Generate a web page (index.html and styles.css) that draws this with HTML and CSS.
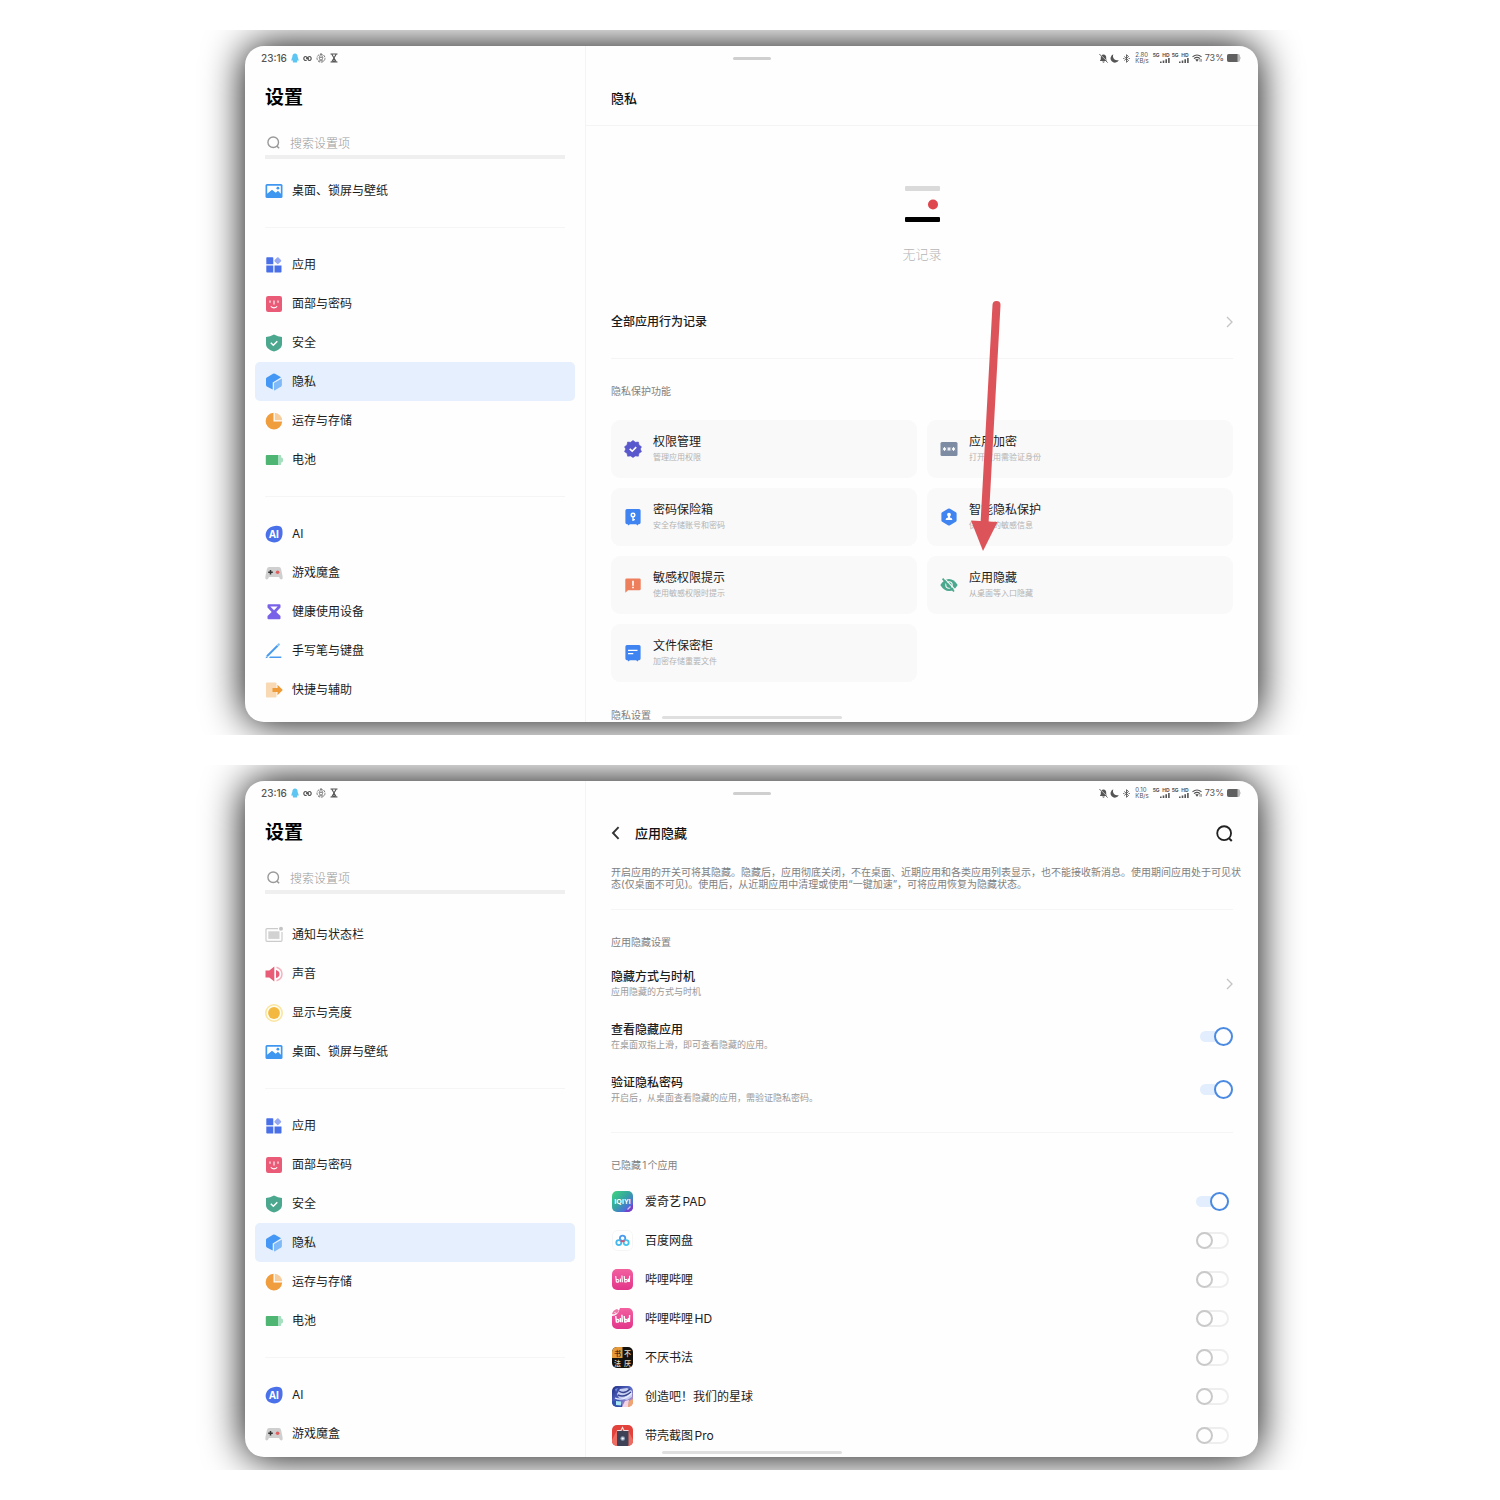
FILE: index.html
```html
<!DOCTYPE html>
<html lang="zh-CN">

<head>
    <meta charset="UTF-8">
    <meta name="viewport" content="width=device-width, initial-scale=1">
    <title>设置 - 隐私</title>
    <link rel="stylesheet" href="styles.css">
</head>

<body>
    <!-- icon sprite -->
    <svg class="sprite" aria-hidden="true">
        <defs>
            <linearGradient id="g-iqiyi" x1="0" y1="0" x2="1" y2="1">
                <stop offset="0" stop-color="#3fd67c" />
                <stop offset=".45" stop-color="#35a5a0" />
                <stop offset=".75" stop-color="#4a72d8" />
                <stop offset="1" stop-color="#8a3fd0" />
            </linearGradient>
            <linearGradient id="g-bili" x1="0" y1="0" x2="0" y2="1">
                <stop offset="0" stop-color="#f2609f" />
                <stop offset="1" stop-color="#e2358a" />
            </linearGradient>
            <linearGradient id="g-planet" x1="0" y1="0" x2="1" y2="1">
                <stop offset="0" stop-color="#1c2c80" />
                <stop offset=".5" stop-color="#5a6bc8" />
                <stop offset="1" stop-color="#e7a0c0" />
            </linearGradient>
            <clipPath id="c-app"><rect width="21" height="21" rx="5" /></clipPath>
        </defs>

        <symbol id="i-qq" viewBox="0 0 8 10">
            <path d="M4 .4C2.200.4 1.400 1.800 1.400 3.400 1.400 4.600.3 5.600.4 7.200c.1.8.6.6 1-.1.1.9.4 1.200.7 1.500-.7.3-.5.9.3.9h3.200c.8 0 1-.6.3-.9.4-.4.6-.7.7-1.500.4.7.9.9 1 .1.1-1.600-1-2.600-1-3.800C6.600 1.800 5.800.4 4 .4z" fill="#5cc5f2" />
        </symbol>
        <symbol id="i-loop" viewBox="0 0 9 7">
            <path d="M3.600 5C2.200 6.200.8 5 .8 3.500S2.200.8 3.500 2L5.500 5C6.800 6.200 8.200 5 8.200 3.500S6.800.8 5.400 2L4.800 2.800M3 3.500h.8M5.300 3.500H6" fill="none" stroke="#555" stroke-width="1.200" />
        </symbol>
        <symbol id="i-wheel" viewBox="0 0 10 10">
            <g fill="none" stroke="#777">
                <circle cx="5" cy="5.200" r="4" stroke-dasharray="2.500 1" />
                <circle cx="5" cy="5.600" r="1.500" />
                <path d="M5 .5L3 5M5 .5L7 5M2.500 7.800h5" stroke-width=".8" />
            </g>
        </symbol>
        <symbol id="i-glass" viewBox="0 0 8 10">
            <path d="M.5 1h7M.5 9h7M1.700 1L6.300 9M6.300 1L1.700 9M3 8h2" fill="none" stroke="#555" stroke-width="1.100" />
        </symbol>
        <symbol id="i-bell" viewBox="0 0 9 9">
            <path d="M4.500.4C2.600.4 1.800 1.900 1.800 3.300v2L.8 7.100h7.400L7.200 5.300v-2C7.200 1.900 6.400.4 4.500.4zM3.300 7.600h2.400c0 1.400-2.400 1.400-2.400 0z" fill="#555" />
            <path d="M1 .4l8 8" stroke="#fefefe" stroke-width="1" />
            <path d="M.4 0l8.200 8.600" stroke="#555" stroke-width=".9" />
        </symbol>
        <symbol id="i-moon" viewBox="0 0 9 9">
            <path d="M3.300.3a4.300 4.300 0 1 0 5.500 5.700Q5 7 3.500 4.300 2.600 2.500 3.300.3z" fill="#555" />
        </symbol>
        <symbol id="i-bt" viewBox="0 0 7 9">
            <path d="M1.300 2.500l4.200 4L3.500 8.300V.7l2 1.800-4.200 4M.2 4.500h1.200M5.600 4.500h1.200" fill="none" stroke="#555" stroke-width=".9" />
        </symbol>
        <symbol id="i-bars" viewBox="0 0 10 5">
            <path d="M0 3.500h1.600V5H0zM2.700 2.500h1.600V5H2.700zM5.400 1.300H7V5H5.400zM8.100 0h1.600v5H8.100z" fill="#555" />
        </symbol>
        <symbol id="i-wifi" viewBox="0 0 10 8">
            <path d="M.5 2.900Q5-.9 9.500 2.900M2 4.600q3-2.600 6 0" fill="none" stroke="#555" stroke-width="1.200" />
            <path d="M3.200 5.600q1.800-1.400 3.600 0L5 7.700z" fill="#555" />
            <path d="M8 5v2.800M9.300 5v2.800" stroke="#666" stroke-width=".7" />
        </symbol>
        <symbol id="i-battery" viewBox="0 0 14 8">
            <rect width="13" height="8" rx="2" fill="#bbb" />
            <path d="M13 2.500q1.200 1.500 0 3z" fill="#bbb" />
            <path d="M2 0h8.500v8H2a2 2 0 0 1-2-2V2a2 2 0 0 1 2-2z" fill="#606060" />
        </symbol>

        <symbol id="i-search" viewBox="0 0 14 14">
            <circle cx="6.700" cy="6.700" r="5.700" fill="none" stroke="currentColor" stroke-width="1.500" />
            <path d="M10.600 10.800L13 13.200" stroke="currentColor" stroke-width="1.700" />
        </symbol>
        <symbol id="i-chevron" viewBox="0 0 7 12">
            <path d="M1 1l5 5-5 5" fill="none" stroke="#c4c4c4" stroke-width="1.300" />
        </symbol>
        <symbol id="i-back" viewBox="0 0 9 14">
            <path d="M7.600 1.200L2 7l5.600 5.800" fill="none" stroke="#333" stroke-width="1.900" />
        </symbol>

        <symbol id="i-wallpaper" viewBox="0 0 18 18">
            <rect x=".5" y="2" width="17" height="14" rx="1.500" fill="#3f97f0" />
            <path d="M2.200 3.700h13.600v8L13 8.800l-2.300 2L7 7.800l-4.800 4z" fill="#fff" />
            <circle cx="12.900" cy="6.200" r="1.400" fill="#3f97f0" />
        </symbol>
        <symbol id="i-apps" viewBox="0 0 18 18">
            <path d="M2 1.300h5.500a.8.8 0 0 1 .8.800v6.200H1.300V2.100a.8.8 0 0 1 .7-.8zM1.300 9.500h7v7H2.100a.8.8 0 0 1-.8-.8zM9.500 9.500h7v6.200a.8.8 0 0 1-.8.8H9.500z" fill="#4a70e8" />
            <rect x="10.100" y="2" width="5.400" height="5.400" rx="1" transform="rotate(45 12.800 4.700)" fill="#96a9f2" />
        </symbol>
        <symbol id="i-face" viewBox="0 0 18 18">
            <rect x="1" y="1" width="16" height="16" rx="2.200" fill="#ea5b77" />
            <path d="M5 5.600v2.200M13 5.600v2.200M9 5.600v4M5.800 11.300q3.200 3.200 6.400 0" fill="none" stroke="#fff" stroke-width="1.100" />
        </symbol>
        <symbol id="i-shield" viewBox="0 0 18 18">
            <path d="M9 .6q4 2.200 8 2.400v7.200C17 13.800 13 16.500 9 17.500 5 16.500 1 13.800 1 10.200V3Q5 2.800 9 .6z" fill="#4ba78e" />
            <path d="M5.800 8.800l2.500 2.400 4-4" fill="none" stroke="#fff" stroke-width="1.500" />
        </symbol>
        <symbol id="i-cube" viewBox="0 0 18 18">
            <path d="M9 .5q.6 0 1 .3l6.100 3.500-8.400 5.100V16.500L1.800 13.400q-.8-.5-.8-1.400V6q0-.9.800-1.400L8 .8q.4-.3 1-.3z" fill="#4497f4" />
            <path d="M9 17.500V10L16.900 5.400V12q0 .9-.8 1.400L10 17.200z" fill="#7fb9f8" />
        </symbol>
        <symbol id="i-pie" viewBox="0 0 18 18">
            <path d="M8.500.8a8.300 8.300 0 1 0 8.700 8.800H8.500z" fill="#f09d3d" />
            <path d="M9.800.8v7.500h7.400A8 8 0 0 0 9.800.8z" fill="#f6cd9d" />
        </symbol>
        <symbol id="i-power" viewBox="0 0 18 18">
            <path d="M13 4h2.200a1 1 0 0 1 1 1v1.500q2 0 2 2.500t-2 2.500V13a1 1 0 0 1-1 1H13z" fill="#a5dfbf" />
            <path d="M1.800 4H13v10H1.800a1 1 0 0 1-1-1V5a1 1 0 0 1 1-1z" fill="#4eb573" />
        </symbol>
        <symbol id="i-game" viewBox="0 0 18 18">
            <path d="M4 3h10q1.600 0 2.100 2l1.600 8q.3 2.400-1.300 2.500-1.400 0-2.400-2.500H4q-1 2.500-2.400 2.500Q0 15.400.3 13l1.600-8Q2.400 3 4 3z" fill="#cfcfcf" />
            <path d="M5.500 6v4.600M3.200 8.300h4.600" stroke="#333" stroke-width="1.500" />
            <circle cx="12.600" cy="8.200" r="1.800" fill="#e0605f" />
        </symbol>
        <symbol id="i-timer" viewBox="0 0 18 18">
            <path d="M3.500 1.200h11a1 1 0 0 1 1 1v2.200L11.300 9l4.200 4v2.300a1 1 0 0 1-1 1h-11a1 1 0 0 1-1-1V13l4.200-4-4.200-4.600V2.200a1 1 0 0 1 1-1z" fill="#7a62e8" />
            <path d="M5.300 3.400h7.400L9 7.300z" fill="#fff" />
        </symbol>
        <symbol id="i-pen" viewBox="0 0 18 18">
            <path d="M2 14.200L12.500 3.700" stroke="#4a9bef" stroke-width="2" />
            <path d="M12.500 3.700L14.500 1.700" stroke="#8cc3f7" stroke-width="2.200" />
            <path d="M1 14.300l-.3 1.900L3 15.500zM5 14.500h11.300v1.400H4z" fill="#4a9bef" />
        </symbol>
        <symbol id="i-shortcut" viewBox="0 0 18 18">
            <rect x="1" y="1.500" width="10.500" height="15" rx="1" fill="#f8d9b3" />
            <path d="M7.500 6.900h5V3.800L17.800 9l-5.300 5.200v-3.100h-5z" fill="#ef9b38" />
        </symbol>
        <symbol id="i-notice" viewBox="0 0 18 18">
            <path d="M13 2.700H2q-1 0-1 1v10.600q0 1 1 1h14q1 0 1-1V6" fill="none" stroke="#cbcbcb" stroke-width="1.200" />
            <rect x="3.300" y="5.300" width="11.200" height="7.600" fill="#d2d2d2" />
            <circle cx="16" cy="2.800" r="2" fill="#c4c4c4" />
        </symbol>
        <symbol id="i-sound" viewBox="0 0 18 18">
            <path d="M.5 5.500h3.800L9.300 1.600v14.800L4.300 12.500H.5zM11 5q3.500 1 3.500 4T11 13z" fill="#e85c77" />
            <path d="M11.500 2.300q5.500 1.700 5.500 6.700t-5.500 6.700" fill="none" stroke="#f5b2bf" stroke-width="1.500" />
        </symbol>
        <symbol id="i-sun" viewBox="0 0 18 18">
            <circle cx="9" cy="9" r="8.200" fill="#fffdf0" stroke="#f9e59f" stroke-width="1.500" />
            <circle cx="9" cy="9" r="5.900" fill="#f3b83f" />
        </symbol>

        <symbol id="i-badge" viewBox="0 0 18 18">
            <path d="M9 .4l2.400 1.900 3-.3.600 3 2.500 1.800L16.300 9l1.200 2.700-2.500 1.500-.6 3-3-.3L9 17.600l-2.400-1.700-3 .3-.6-3L.5 11.700 1.700 9 .5 6.800 3 5l.6-3 3 .3z" fill="#5a58cd" stroke="#5a58cd" stroke-linejoin="round" stroke-width=".6" />
            <path d="M5.700 8.900l2.500 2.300 4-4.100" fill="none" stroke="#fff" stroke-width="1.600" />
        </symbol>
        <symbol id="i-dots" viewBox="0 0 18 18">
            <rect x=".5" y="2" width="17" height="14" rx="1.500" fill="#7d8ca3" />
            <path d="M4.500 7v4M2.800 8l3.400 2M6.200 8l-3.400 2M9 7v4M7.300 8l3.400 2M10.700 8l-3.400 2M13.500 7v4M11.800 8l3.400 2M15.200 8l-3.400 2" stroke="#fff" stroke-width=".9" />
        </symbol>
        <symbol id="i-safe" viewBox="0 0 18 18">
            <path d="M3 1h12q1.600 0 1.600 1.600v12q0 1.600-1.600 1.600h-.6l-1 1.400-1.200-1.400H5.800l-1.200 1.400-1-1.400H3q-1.600 0-1.600-1.600v-12Q1.400 1 3 1z" fill="#3f84f0" />
            <circle cx="9" cy="7" r="1.800" fill="none" stroke="#fff" stroke-width="1.400" />
            <path d="M9 8.800v4.300M9 11.600h1.900" stroke="#fff" stroke-width="1.300" />
        </symbol>
        <symbol id="i-person" viewBox="0 0 18 18">
            <path d="M9 .5q.6 0 1 .3l5.800 3.400q.8.500.8 1.400v6.800q0 .9-.8 1.400L10 17.200q-1 .6-2 0l-5.800-3.400q-.8-.5-.8-1.400V5.600q0-.9.800-1.400L8 .8q.4-.3 1-.3z" fill="#3f84f0" />
            <circle cx="9" cy="6.700" r="1.900" fill="#fff" />
            <path d="M8 8h2v1.600q2.400.3 2.400 2.400H5.600q0-2.100 2.400-2.400z" fill="#fff" />
        </symbol>
        <symbol id="i-warn" viewBox="0 0 18 18">
            <path d="M2.500 2.500h13q1.200 0 1.200 1.200v9.300q0 1.200-1.200 1.200H4L1.300 16.800V3.700q0-1.200 1.200-1.200z" fill="#ed7f5c" />
            <path d="M9 4.800v5M9 10.700v1.600" stroke="#fff" stroke-width="1.600" />
        </symbol>
        <symbol id="i-hide" viewBox="0 0 18 18">
            <path d="M.3 9Q4 3 9 3t8.700 6Q14 15 9 15T.3 9z" fill="#4ba78e" />
            <circle cx="9" cy="9" r="3.200" fill="none" stroke="#f9f9f9" stroke-width="1.100" />
            <path d="M4.400 2.400l11.400 12" stroke="#f9f9f9" stroke-width="1.200" />
            <path d="M2.600 2.600L14 15.500" stroke="#4ba78e" stroke-width="1.700" />
        </symbol>
        <symbol id="i-cabinet" viewBox="0 0 18 18">
            <path d="M3 1h12q1.600 0 1.600 1.600v12q0 1.600-1.600 1.600h-.6l-1 1.400-1.200-1.400H5.800l-1.200 1.400-1-1.400H3q-1.600 0-1.600-1.600v-12Q1.400 1 3 1z" fill="#3f84f0" />
            <path d="M4 6.400h9.500M4 9.600h5.300" stroke="#fff" stroke-width="1.400" />
        </symbol>

        <symbol id="a-pan" viewBox="0 0 21 21">
            <rect x=".5" y=".5" width="20" height="20" rx="5" fill="#fff" stroke="#f5f5f5" />
            <g fill="none" stroke-width="1.800">
                <circle cx="10.600" cy="8.300" r="2.700" stroke="#4a9af0" />
                <circle cx="6.800" cy="12.600" r="2.500" stroke="#45b8ee" />
                <circle cx="14.200" cy="12.600" r="2.500" stroke="#45c3ee" />
                <path d="M8.700 10.300q1.900 2 3.800 0" stroke="#e9506a" />
            </g>
        </symbol>
        <symbol id="a-bili" viewBox="0 0 21 21">
            <rect width="21" height="21" rx="5" fill="url(#g-bili)" />
            <g fill="none" stroke="#fff" stroke-width="1.100">
                <path d="M3.700 7l.7 6q2.700.4 2.600-1.200t-2.500-1.300M8.300 9.500l.4 3.800M9.900 6.500l.5 6.800M12.200 7l.6 6q2.700.2 2.500-1.400t-2.600-1M16.400 9.500v3.500M17.600 6.700l-.2 6.300" />
            </g>
        </symbol>
        <symbol id="a-bilihd" viewBox="0 0 21 21">
            <path d="M8 0h8a5 5 0 0 1 5 5v11a5 5 0 0 1-5 5H5a5 5 0 0 1-5-5V8q6 0 8-8z" fill="url(#g-bili)" />
            <path d="M0 6q1-4 5-5l2 1.500Q5 7 0 6z" fill="#ef77a9" />
            <path d="M2.500 4.500l2 1.200" stroke="#fff" />
            <g fill="none" stroke="#fff" stroke-width="1.400">
                <path d="M3.700 8l.7 6q2.700.4 2.600-1.200t-2.500-1.300M8.300 10l.4 4.300M9.900 6.800l.5 7.500M12.200 8l.6 6q2.700.2 2.500-1.400t-2.600-1M16.400 10v4M17.600 7l-.2 7" />
            </g>
        </symbol>
        <symbol id="a-planet" viewBox="0 0 21 21">
            <g clip-path="url(#c-app)">
                <rect width="21" height="21" fill="url(#g-planet)" />
                <path d="M8 3l7-1 5 3v6l-5 3-8-2-2-4z" fill="#c5cdf0" />
                <path d="M6 9q6 3 13-3M7 5q5 4 11-2" fill="none" stroke="#39458f" stroke-width="1.400" />
                <path d="M3 12q8 4 17-5" fill="none" stroke="#e9edff" stroke-width="1.200" />
                <path d="M0 15l7-1 4 7H0z" fill="#3350ae" />
                <path d="M4 15l5 .5v4l-5-.5z" fill="#a8e8f5" />
                <path d="M10 21l3-6 4-1-1 7z" fill="#f4d3e2" />
                <path d="M17 15l4-2v8h-5z" fill="#f0a56e" />
                <path d="M3 3l3-1-2 4z" fill="#6f85e0" />
            </g>
        </symbol>
        <symbol id="a-shell" viewBox="0 0 21 21">
            <rect width="21" height="21" rx="5" fill="#e2423b" />
            <path d="M0 15L5 5h11l5 10v1a5 5 0 0 1-5 5H5a5 5 0 0 1-5-5z" fill="#ed6c62" />
            <rect x="5" y="5.500" width="11.500" height="15.500" rx="1" fill="#3d4257" />
            <path d="M5 5.500h4l1.500-3 1.500 3h4.500" fill="none" stroke="#f2dedd" stroke-width="1.200" />
            <circle cx="10.700" cy="13.500" r="2.300" fill="#8fa3bd" />
            <circle cx="10.700" cy="13.500" r="1.100" fill="#fff" />
        </symbol>
    </svg>

    <!-- 隐私 -->
    <section class="stage">
        <div class="screen">
            <aside class="sidebar">
                <div class="status status-left">
                    <span class="clock">23:16</span>
                    <svg width="8" height="10"><use href="#i-qq" /></svg>
                    <svg width="9" height="7"><use href="#i-loop" /></svg>
                    <svg width="10" height="10"><use href="#i-wheel" /></svg>
                    <svg width="8" height="10"><use href="#i-glass" /></svg>
                </div>
                <h1 class="title">设置</h1>
                <label class="search">
                    <svg width="13" height="13"><use href="#i-search" /></svg>
                    <input type="text" placeholder="搜索设置项" aria-label="搜索设置项">
                </label>
                <nav class="nav">
                    <a href="#"><svg class="icon"><use href="#i-wallpaper" /></svg>桌面、锁屏与壁纸</a>
                    <hr>
                    <a href="#"><svg class="icon"><use href="#i-apps" /></svg>应用</a>
                    <a href="#"><svg class="icon"><use href="#i-face" /></svg>面部与密码</a>
                    <a href="#"><svg class="icon"><use href="#i-shield" /></svg>安全</a>
                    <a href="#" class="active"><svg class="icon"><use href="#i-cube" /></svg>隐私</a>
                    <a href="#"><svg class="icon"><use href="#i-pie" /></svg>运存与存储</a>
                    <a href="#"><svg class="icon"><use href="#i-power" /></svg>电池</a>
                    <hr>
                    <a href="#">
                        <svg class="icon" viewBox="0 0 18 18">
                            <path d="M7.500 1.500C12 .2 16.700.8 17.300 4.500c.6 4 .2 7.500-1.500 9.800-2.600 3.600-8 3.900-11.300 2C1 14.300-.2 10.500 1.200 7 2.300 4.300 4.600 2.300 7.500 1.500z" fill="#4a71ea" />
                            <text x="9" y="12.500" text-anchor="middle" class="ai-text">AI</text>
                        </svg>AI
                    </a>
                    <a href="#"><svg class="icon"><use href="#i-game" /></svg>游戏魔盒</a>
                    <a href="#"><svg class="icon"><use href="#i-timer" /></svg>健康使用设备</a>
                    <a href="#"><svg class="icon"><use href="#i-pen" /></svg>手写笔与键盘</a>
                    <a href="#"><svg class="icon"><use href="#i-shortcut" /></svg>快捷与辅助</a>
                </nav>
            </aside>

            <main class="content">
                <div class="status status-right">
                    <svg width="9" height="9"><use href="#i-bell" /></svg>
                    <svg width="9" height="9"><use href="#i-moon" /></svg>
                    <svg class="bt" width="7" height="9"><use href="#i-bt" /></svg>
                    <span class="speed">2.80<br>KB/s</span>
                    <span class="signal"><b>5G</b><b>HD</b><svg width="10" height="5"><use href="#i-bars" /></svg></span>
                    <span class="signal"><b>5G</b><b>HD</b><svg width="10" height="5"><use href="#i-bars" /></svg></span>
                    <svg class="wifi" width="10" height="8"><use href="#i-wifi" /></svg>
                    <span class="percent">73%</span>
                    <svg width="14" height="8"><use href="#i-battery" /></svg>
                </div>
                <header class="bar bar-line">
                    <h2>隐私</h2>
                </header>
                <div class="body">
                    <div class="empty">
                        <svg width="35" height="37" viewBox="0 0 35 37">
                            <rect width="35" height="5" rx="1" fill="#dadada" />
                            <circle cx="28" cy="18.500" r="5" fill="#df474e" />
                            <rect y="31" width="35" height="5" rx="1" fill="#000" />
                        </svg>
                        <p>无记录</p>
                    </div>
                    <a href="#" class="record">全部应用行为记录<svg width="7" height="12"><use href="#i-chevron" /></svg></a>
                    <h3 class="label">隐私保护功能</h3>
                    <div class="cards">
                        <a href="#" class="card">
                            <svg class="icon"><use href="#i-badge" /></svg>
                            <span><strong>权限管理</strong><small>管理应用权限</small></span>
                        </a>
                        <a href="#" class="card">
                            <svg class="icon"><use href="#i-dots" /></svg>
                            <span><strong>应用加密</strong><small>打开应用需验证身份</small></span>
                        </a>
                        <a href="#" class="card">
                            <svg class="icon"><use href="#i-safe" /></svg>
                            <span><strong>密码保险箱</strong><small>安全存储账号和密码</small></span>
                        </a>
                        <a href="#" class="card">
                            <svg class="icon"><use href="#i-person" /></svg>
                            <span><strong>智能隐私保护</strong><small>保护你的敏感信息</small></span>
                        </a>
                        <a href="#" class="card">
                            <svg class="icon"><use href="#i-warn" /></svg>
                            <span><strong>敏感权限提示</strong><small>使用敏感权限时提示</small></span>
                        </a>
                        <a href="#" class="card">
                            <svg class="icon"><use href="#i-hide" /></svg>
                            <span><strong>应用隐藏</strong><small>从桌面等入口隐藏</small></span>
                            <svg class="arrow" width="32" height="251" viewBox="0 0 32 251" aria-hidden="true">
                                <path d="M25.500 5L13.500 224" stroke="#dc545a" stroke-width="8" stroke-linecap="round" />
                                <path d="M0 220.500l26.500 1.500L12 251z" fill="#dc545a" />
                            </svg>
                        </a>
                        <a href="#" class="card">
                            <svg class="icon"><use href="#i-cabinet" /></svg>
                            <span><strong>文件保密柜</strong><small>加密存储重要文件</small></span>
                        </a>
                    </div>
                    <h3 class="label">隐私设置</h3>
                </div>
            </main>
            <i class="handle"></i>
            <i class="home-bar"></i>
        </div>
    </section>

    <!-- 应用隐藏 -->
    <section class="stage">
        <div class="screen">
            <aside class="sidebar">
                <div class="status status-left">
                    <span class="clock">23:16</span>
                    <svg width="8" height="10"><use href="#i-qq" /></svg>
                    <svg width="9" height="7"><use href="#i-loop" /></svg>
                    <svg width="10" height="10"><use href="#i-wheel" /></svg>
                    <svg width="8" height="10"><use href="#i-glass" /></svg>
                </div>
                <h1 class="title">设置</h1>
                <label class="search">
                    <svg width="13" height="13"><use href="#i-search" /></svg>
                    <input type="text" placeholder="搜索设置项" aria-label="搜索设置项">
                </label>
                <nav class="nav nav-top">
                    <a href="#"><svg class="icon"><use href="#i-notice" /></svg>通知与状态栏</a>
                    <a href="#"><svg class="icon"><use href="#i-sound" /></svg>声音</a>
                    <a href="#"><svg class="icon"><use href="#i-sun" /></svg>显示与亮度</a>
                    <a href="#"><svg class="icon"><use href="#i-wallpaper" /></svg>桌面、锁屏与壁纸</a>
                    <hr>
                    <a href="#"><svg class="icon"><use href="#i-apps" /></svg>应用</a>
                    <a href="#"><svg class="icon"><use href="#i-face" /></svg>面部与密码</a>
                    <a href="#"><svg class="icon"><use href="#i-shield" /></svg>安全</a>
                    <a href="#" class="active"><svg class="icon"><use href="#i-cube" /></svg>隐私</a>
                    <a href="#"><svg class="icon"><use href="#i-pie" /></svg>运存与存储</a>
                    <a href="#"><svg class="icon"><use href="#i-power" /></svg>电池</a>
                    <hr>
                    <a href="#">
                        <svg class="icon" viewBox="0 0 18 18">
                            <path d="M7.500 1.500C12 .2 16.700.8 17.300 4.500c.6 4 .2 7.500-1.500 9.800-2.600 3.600-8 3.900-11.300 2C1 14.300-.2 10.500 1.200 7 2.300 4.300 4.600 2.300 7.500 1.500z" fill="#4a71ea" />
                            <text x="9" y="12.500" text-anchor="middle" class="ai-text">AI</text>
                        </svg>AI
                    </a>
                    <a href="#"><svg class="icon"><use href="#i-game" /></svg>游戏魔盒</a>
                </nav>
            </aside>

            <main class="content">
                <div class="status status-right">
                    <svg width="9" height="9"><use href="#i-bell" /></svg>
                    <svg width="9" height="9"><use href="#i-moon" /></svg>
                    <svg class="bt" width="7" height="9"><use href="#i-bt" /></svg>
                    <span class="speed">0.10<br>KB/s</span>
                    <span class="signal"><b>5G</b><b>HD</b><svg width="10" height="5"><use href="#i-bars" /></svg></span>
                    <span class="signal"><b>5G</b><b>HD</b><svg width="10" height="5"><use href="#i-bars" /></svg></span>
                    <svg class="wifi" width="10" height="8"><use href="#i-wifi" /></svg>
                    <span class="percent">73%</span>
                    <svg width="14" height="8"><use href="#i-battery" /></svg>
                </div>
                <header class="bar">
                    <button type="button" class="back" aria-label="返回"><svg width="9" height="14"><use href="#i-back" /></svg></button>
                    <h2>应用隐藏</h2>
                    <button type="button" class="find" aria-label="搜索"><svg width="17" height="17"><use href="#i-search" /></svg></button>
                </header>
                <div class="body">
                    <p class="desc">开启应用的开关可将其隐藏。隐藏后，应用彻底关闭，不在桌面、近期应用和各类应用列表显示，也不能接收新消息。使用期间应用处于可见状<br>态(仅桌面不可见)。使用后，从近期应用中清理或使用“一键加速”，可将应用恢复为隐藏状态。</p>
                    <h3 class="label">应用隐藏设置</h3>
                    <div class="options">
                        <a href="#" class="option">
                            <span><strong>隐藏方式与时机</strong><small>应用隐藏的方式与时机</small></span>
                            <svg width="7" height="12"><use href="#i-chevron" /></svg>
                        </a>
                        <label class="option">
                            <span><strong>查看隐藏应用</strong><small>在桌面双指上滑，即可查看隐藏的应用。</small></span>
                            <input type="checkbox" class="switch" checked>
                        </label>
                        <label class="option">
                            <span><strong>验证隐私密码</strong><small>开启后，从桌面查看隐藏的应用，需验证隐私密码。</small></span>
                            <input type="checkbox" class="switch" checked>
                        </label>
                    </div>
                    <h3 class="label">已隐藏1个应用</h3>
                    <div class="apps">
                        <label class="app">
                            <svg viewBox="0 0 21 21">
                                <rect width="21" height="21" rx="5" fill="url(#g-iqiyi)" />
                                <path d="M21 13v3a5 5 0 0 1-5 5h-4z" fill="#7442c8" />
                                <path d="M15.500 18.500l3-3" stroke="#d6c0f5" stroke-width="1.200" />
                                <text x="10.500" y="13" text-anchor="middle" class="iqiyi-text">iQIYI</text>
                            </svg>爱奇艺PAD<input type="checkbox" class="switch" checked>
                        </label>
                        <label class="app"><svg><use href="#a-pan" /></svg>百度网盘<input type="checkbox" class="switch"></label>
                        <label class="app"><svg><use href="#a-bili" /></svg>哔哩哔哩<input type="checkbox" class="switch"></label>
                        <label class="app"><svg><use href="#a-bilihd" /></svg>哔哩哔哩HD<input type="checkbox" class="switch"></label>
                        <label class="app">
                            <svg viewBox="0 0 21 21">
                                <g clip-path="url(#c-app)">
                                    <rect width="21" height="21" fill="#14120f" />
                                    <rect width="10.500" height="11" fill="#e59a3c" />
                                    <text x="2" y="8.500" class="brush-text brush-dark">书</text>
                                    <text x="12" y="8.500" class="brush-text">不</text>
                                    <text x="2" y="18.500" class="brush-text">法</text>
                                    <text x="12" y="18.500" class="brush-text">厌</text>
                                </g>
                            </svg>不厌书法<input type="checkbox" class="switch">
                        </label>
                        <label class="app"><svg><use href="#a-planet" /></svg>创造吧！我们的星球<input type="checkbox" class="switch"></label>
                        <label class="app"><svg><use href="#a-shell" /></svg>带壳截图Pro<input type="checkbox" class="switch"></label>
                    </div>
                </div>
            </main>
            <i class="handle"></i>
            <i class="home-bar"></i>
        </div>
    </section>
</body>

</html>
```
FILE: styles.css
```css
*,
*::before {
    box-sizing: border-box;
}

body {
    margin: 0;
    padding: 30px 0;
    display: flex;
    flex-direction: column;
    gap: 30px;
    background: #fff;
    color: #1c1c1c;
    font-family: Inter, "Noto Sans CJK SC", sans-serif;
    font-size: 12px;
    line-height: 16px;
    text-autospace: normal;
}

h1, h2, h3, p {
    margin: 0;
}

a {
    color: inherit;
    text-decoration: none;
}

svg {
    display: block;
    flex: none;
}

button {
    padding: 0;
    border: 0;
    background: none;
    color: #222;
}

.sprite {
    position: absolute;
    width: 0;
    height: 0;
}

/* text inside icons */
.ai-text {
    font: bold 10px "Open Sans", sans-serif;
    fill: #fff;
}

.iqiyi-text {
    font: bold 7px "Open Sans", sans-serif;
    fill: #fff;
}

.brush-text {
    font: 500 7px "Noto Sans CJK SC", sans-serif;
    fill: #e3d9c2;
}

.brush-dark {
    fill: #1d1306;
}

/* tablet */
.stage {
    padding: 16px 242px 13px 245px;
    overflow: hidden;
}

.screen {
    position: relative;
    display: flex;
    aspect-ratio: 1013 / 676;
    overflow: hidden;
    border-radius: 19px;
    background: #fefefe;
    box-shadow: 0 0 40px #000;
}

.handle,
.home-bar {
    position: absolute;
    left: 50%;
    height: 3px;
    border-radius: 2px;
    transform: translateX(-50%);
}

.handle {
    top: 11px;
    width: 38px;
    background: #cfcfcf;
}

.home-bar {
    bottom: 3px;
    width: 180px;
    background: #dfdfdf;
}

/* status bar */
.status {
    display: flex;
    align-items: center;
    height: 24px;
    color: #555;
}

.status-left {
    gap: 4px;
    padding-left: 16px;
}

.clock {
    font-size: 10px;
    font-weight: 500;
}

.status-right {
    justify-content: flex-end;
    gap: 2px;
    padding-right: 17px;
}

.bt {
    margin: 0 3px 0 2px;
}

.speed {
    margin-right: 2px;
    font-size: 6px;
    line-height: 6px;
}

.signal {
    display: grid;
    grid-template-columns: 7px 10px;
    font-size: 5px;
    line-height: 5px;
}

.signal b + b {
    text-align: right;
}

.signal svg {
    grid-column: 2;
}

.wifi {
    margin-left: 1px;
}

.percent {
    margin: 0 1px;
    font-size: 9px;
}

/* sidebar */
.sidebar {
    flex: 0 0 341px;
    border-right: 1px solid #f4f4f4;
}

.title {
    padding-left: 20px;
    color: #000;
    font-size: 19px;
    line-height: 56px;
}

.search {
    display: flex;
    align-items: center;
    gap: 10px;
    height: 29px;
    margin: 4px 20px 0;
    padding-left: 2px;
    border-bottom: 4px solid #efefef;
    color: #999;
}

.search input {
    flex: 1;
    min-width: 0;
    padding: 0;
    border: 0;
    outline: 0;
    background: none;
    font: 300 12px "Noto Sans CJK SC", sans-serif;
}

.search input::placeholder {
    color: #999;
}

.nav {
    padding: 12px 10px 0;
}

.nav-top {
    padding-top: 21px;
}

.nav a {
    display: flex;
    align-items: center;
    gap: 9px;
    height: 39px;
    padding-left: 10px;
    border-radius: 5px;
}

.nav .active {
    background: #e5effd;
}

.nav hr {
    height: 1px;
    margin: 17px 10px;
    border: 0;
    background: #f5f5f5;
}

.icon {
    width: 18px;
    height: 18px;
}

/* right side */
.content {
    flex: 1;
    min-width: 0;
}

.bar {
    display: flex;
    align-items: center;
    height: 56px;
    padding: 0 25px;
}

.bar-line {
    border-bottom: 1px solid #f4f4f4;
}

.bar h2 {
    color: #111;
    font-size: 13px;
    font-weight: 500;
}

.back {
    margin-right: 15px;
}

.find {
    margin-left: auto;
}

.body {
    padding: 0 25px;
}

.label {
    margin: 22px 0 0;
    color: #808080;
    font-size: 10px;
    font-weight: 400;
    line-height: 20px;
}

.empty {
    display: flex;
    flex-direction: column;
    align-items: center;
    gap: 21px;
    padding: 60px 0 22px;
    color: #b5b5b5;
    font-size: 13px;
    font-weight: 300;
    line-height: 20px;
}

.record {
    display: flex;
    align-items: center;
    justify-content: space-between;
    height: 73px;
    border-bottom: 1px solid #f5f5f5;
    font-weight: 500;
}

strong,
small {
    display: block;
}

strong {
    color: #1c1c1c;
    font-size: 12px;
    font-weight: 400;
    line-height: 16px;
}

small {
    line-height: 14px;
}

.cards {
    display: grid;
    grid-template-columns: 1fr 1fr;
    gap: 10px;
    margin: 19px 0 23px;
}

.card {
    position: relative;
    display: flex;
    align-items: center;
    gap: 11px;
    height: 58px;
    padding-left: 13px;
    border-radius: 9px;
    background: #f9f9f9;
}

.card small {
    color: #b3b3b3;
    font-size: 8px;
}

/* pointer that runs down to the card from above */
.arrow {
    position: absolute;
    left: 44px;
    bottom: calc(100% + 5px);
    pointer-events: none;
}

.desc {
    padding: 5px 0 19px;
    border-bottom: 1px solid #f5f5f5;
    color: #808080;
    font-size: 10px;
    line-height: 12px;
    white-space: nowrap;
}

.options {
    padding: 5px 0 16px;
    border-bottom: 1px solid #f5f5f5;
}

.option {
    display: flex;
    align-items: center;
    justify-content: space-between;
    height: 53px;
}

.option strong {
    font-weight: 500;
}

.option small {
    color: #999;
    font-size: 9px;
}

.apps {
    padding: 7px 4px 0 1px;
}

.app {
    display: flex;
    align-items: center;
    gap: 12px;
    height: 39px;
}

.app svg {
    width: 21px;
    height: 21px;
}

.app .switch {
    margin-left: auto;
}

.switch {
    appearance: none;
    display: flex;
    align-items: center;
    flex: none;
    width: 33px;
    height: 17px;
    margin: 0;
    border-radius: 9px;
    box-shadow: inset 0 0 0 2px #eee;
}

.switch::before {
    content: "";
    flex: none;
    width: 17px;
    height: 17px;
    border: 2px solid #c9c9c9;
    border-radius: 50%;
    background: #fefefe;
}

.switch:checked {
    justify-content: flex-end;
    height: 11px;
    background: #e2eefd;
    box-shadow: none;
}

.switch:checked::before {
    width: 19px;
    height: 19px;
    border-color: #4a8ae2;
}
```
